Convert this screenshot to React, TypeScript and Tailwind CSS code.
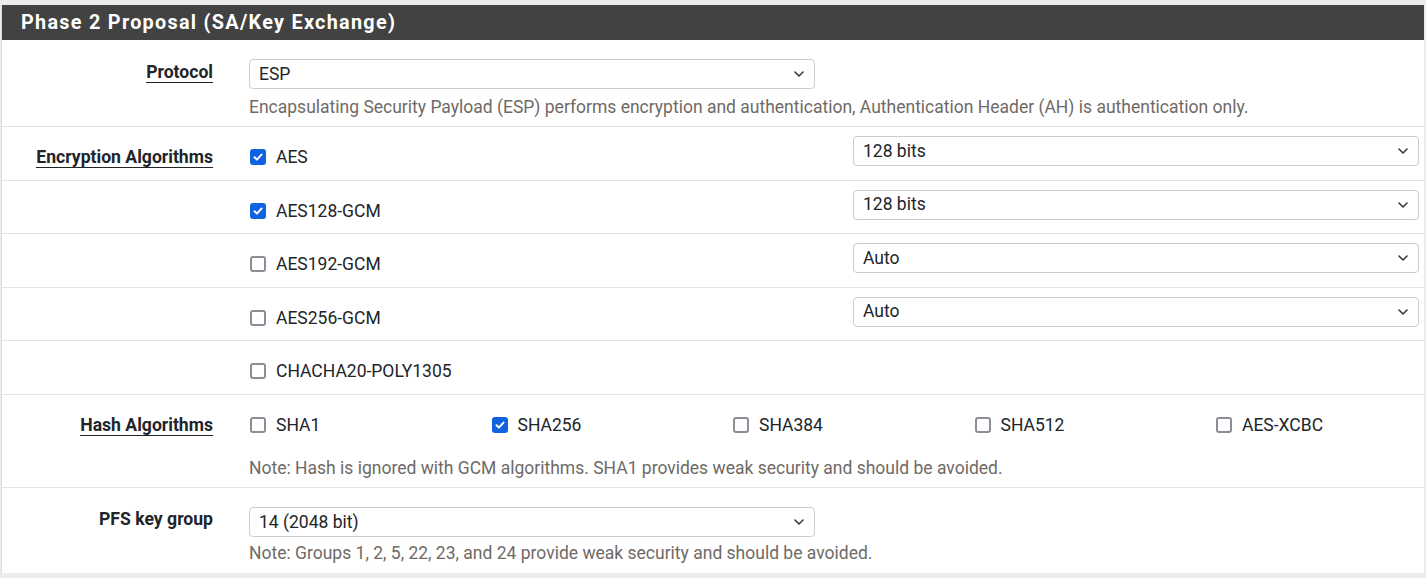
import { clsx } from 'clsx';

const font = { fontFamily: 'Roboto, "Liberation Sans", sans-serif' };

function Chevron() {
  return (
    <svg width="10" height="6" viewBox="0 0 10 6" className="shrink-0">
      <path d="M1 1l4 4 4-4" fill="none" stroke="#343a40" strokeWidth="1.6" strokeLinecap="round" strokeLinejoin="round" />
    </svg>
  );
}

function Select({ value, className }: { value: string; className?: string }) {
  return (
    <div
      className={clsx(
        'h-[30px] flex items-center justify-between pl-[9px] pr-[10px] border border-[#c9ccd0] rounded-[4px] bg-white text-[17.5px] text-[#212529]',
        className
      )}
    >
      <span>{value}</span>
      <Chevron />
    </div>
  );
}

function Checkbox({ checked }: { checked?: boolean }) {
  if (checked) {
    return (
      <span className="w-4 h-4 shrink-0 rounded-[3px] bg-[#0f62e0] flex items-center justify-center">
        <svg width="12" height="12" viewBox="0 0 12 12">
          <path d="M2.5 6.2l2.4 2.4 4.6-5" fill="none" stroke="white" strokeWidth="2" strokeLinecap="round" strokeLinejoin="round" />
        </svg>
      </span>
    );
  }
  return <span className="w-4 h-4 shrink-0 rounded-[3px] border-2 border-[#8d8d98] bg-white" />;
}

function Check({ label, checked }: { label: string; checked?: boolean }) {
  return (
    <div className="flex items-center gap-[10px] text-[17.5px] leading-[24px] text-[#212529]">
      <Checkbox checked={checked} />
      <span>{label}</span>
    </div>
  );
}

function Label({ text, underline = true, className }: { text: string; underline?: boolean; className?: string }) {
  return (
    <div className={clsx('w-[211px] shrink-0 flex justify-end items-start', className)}>
      <span
        className={clsx(
          'inline-block font-bold text-[17.6px] leading-[19px] text-[#212529]',
          underline && 'border-b-[1.5px] border-[#212529]'
        )}
      >
        {text}
      </span>
    </div>
  );
}

const encryption = [
  { name: 'AES', checked: true, bits: '128 bits', label: true },
  { name: 'AES128-GCM', checked: true, bits: '128 bits' },
  { name: 'AES192-GCM', checked: false, bits: 'Auto' },
  { name: 'AES256-GCM', checked: false, bits: 'Auto' },
  { name: 'CHACHA20-POLY1305', checked: false },
];

const hashes = [
  { name: 'SHA1' },
  { name: 'SHA256', checked: true },
  { name: 'SHA384' },
  { name: 'SHA512' },
  { name: 'AES-XCBC' },
];

export default function App() {
  return (
    <div className="w-[1426px] h-[578px] bg-[#ececec] pt-[5px] overflow-hidden" style={font}>
      <div className="ml-[1px] w-[1423px] bg-white border-l border-[#dcdcdc]">
        {/* Header */}
        <div className="h-[35px] bg-[#424242] flex items-center pl-[19px]">
          <h2 className="text-white font-bold text-[19.8px] tracking-[1.3px]">Phase 2 Proposal (SA/Key Exchange)</h2>
        </div>

        {/* Protocol */}
        <div className="flex border-b border-[#e3e3e3] h-[87px] pt-[19px]">
          <Label text="Protocol" className="pt-[4px]" />
          <div className="ml-[36px]">
            <Select value="ESP" className="w-[566px]" />
            <p className="mt-[5px] leading-[26px] text-[17.5px] text-[#6f6a66]">
              Encapsulating Security Payload (ESP) performs encryption and authentication, Authentication Header (AH) is authentication only.
            </p>
          </div>
        </div>

        {/* Encryption */}
        {encryption.map((e) => (
          <div key={e.name} className="flex border-b border-[#e3e3e3] h-[53.5px]">
            {e.label ? (
              <Label text="Encryption Algorithms" className="pt-[21px]" />
            ) : (
              <div className="w-[211px] shrink-0" />
            )}
            <div className="ml-[37px] w-[603px] pt-[18px]">
              <Check label={e.name} checked={e.checked} />
            </div>
            {e.bits && (
              <div className="pt-[9px]">
                <Select value={e.bits} className="w-[566px]" />
              </div>
            )}
          </div>
        ))}

        {/* Hash */}
        <div className="flex border-b border-[#e3e3e3] h-[93px] pt-[18.5px]">
          <Label text="Hash Algorithms" className="pt-[3px]" />
          <div className="ml-[37px]">
            <div className="flex">
              {hashes.map((h) => (
                <div key={h.name} className="w-[241.5px]">
                  <Check label={h.name} checked={h.checked} />
                </div>
              ))}
            </div>
            <p className="mt-[18px] -ml-[1px] leading-[26px] text-[17.5px] text-[#6f6a66]">
              Note: Hash is ignored with GCM algorithms. SHA1 provides weak security and should be avoided.
            </p>
          </div>
        </div>

        {/* PFS */}
        <div className="flex h-[85.5px] pt-[19.5px]">
          <Label text="PFS key group" underline={false} className="pt-[3px]" />
          <div className="ml-[36px]">
            <Select value="14 (2048 bit)" className="w-[566px]" />
            <p className="mt-[3px] leading-[26px] text-[17.5px] text-[#6f6a66]">
              Note: Groups 1, 2, 5, 22, 23, and 24 provide weak security and should be avoided.
            </p>
          </div>
        </div>
      </div>
    </div>
  );
}
